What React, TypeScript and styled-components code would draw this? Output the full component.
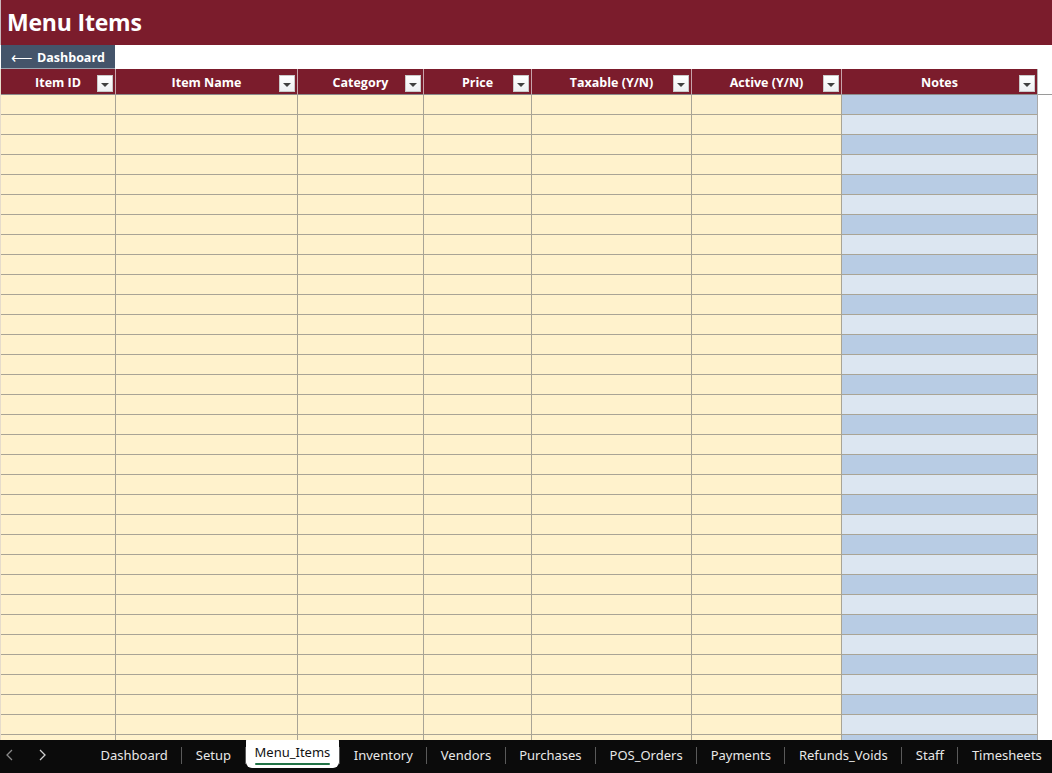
import React from "react";
import styled, { createGlobalStyle } from "styled-components";

const Global = createGlobalStyle`
  html, body { margin: 0; padding: 0; background: #ffffff; }
  body { font-family: "Open Sans", "Noto Sans", Arial, sans-serif; overflow: hidden; }
  * { box-sizing: border-box; }
`;

const Page = styled.div`
  width: 1052px;
  height: 773px;
  display: flex;
  flex-direction: column;
  background: #ffffff;
  overflow: hidden;
`;

const TitleBar = styled.div`
  height: 45px;
  background: #7b1c2c;
  border-left: 1px solid #c8b7bb;
  display: flex;
  align-items: center;
  padding-left: 6px;
`;

const Title = styled.h1`
  margin: 0;
  color: #ffffff;
  font-family: "Open Sans", "Noto Sans", sans-serif;
  font-weight: 700;
  font-size: 23px;
  letter-spacing: -0.2px;
  margin-top: -1px;
`;

const ButtonRow = styled.div`
  height: 24px;
  display: flex;
  padding-left: 1px;
`;

const BackButton = styled.div`
  width: 114px;
  height: 24px;
  padding-top: 1px;
  background: #44546a;
  color: #ffffff;
  font-weight: 700;
  font-size: 12.5px;
  display: flex;
  align-items: center;
  justify-content: center;
  gap: 4px;
  border-bottom: 1px solid #9aa3ae;
`;

const Sheet = styled.div`
  flex: 1;
  overflow: hidden;
  border-left: 1px solid #e6dccb;
`;

const COLS = "114px 182px 126px 108px 160px 150px 196px 1fr";

const HeaderRow = styled.div`
  display: grid;
  grid-template-columns: ${COLS};
  height: 26px;
`;

const HeaderCell = styled.div`
  position: relative;
  background: #7b1c2c;
  color: #ffffff;
  font-weight: 700;
  font-size: 12.5px;
  padding-top: 1px;
  display: flex;
  align-items: center;
  justify-content: center;
  border-left: 1px solid #c9a4ab;
  border-bottom: 1px solid #8c8c8c;
  &:first-child { border-left: none; }
`;

const HeaderFiller = styled.div`
  background: #ffffff;
  border-bottom: 1px solid #9a9a9a;
  border-left: 1px solid #b7b7b7;
`;

const FilterButton = styled.div`
  position: absolute;
  right: 2px;
  top: 6px;
  width: 16px;
  height: 17px;
  background: linear-gradient(#ffffff, #eef0f3);
  border: 1px solid #c9c9c9;
  display: flex;
  align-items: center;
  justify-content: center;
`;

const Tri = styled.div`
  width: 0;
  height: 0;
  border-left: 4px solid transparent;
  border-right: 4px solid transparent;
  border-top: 4px solid #404040;
  margin-top: 2px;
`;

const DataRow = styled.div`
  display: grid;
  grid-template-columns: ${COLS};
  height: 20px;
`;

const Cell = styled.div<{ $notes?: boolean; $dark?: boolean }>`
  background: ${(p) => (p.$notes ? (p.$dark ? "#b8cce4" : "#dce6f1") : "#fff2cc")};
  border-left: 1px solid #a9a495;
  border-bottom: 1px solid #a9a495;
  &:first-child { border-left: none; }
`;

const Filler = styled.div`
  background: #ffffff;
  border-left: 1px solid #a9a9a9;
`;

const TabBar = styled.div`
  height: 33px;
  background: #0b0b0b;
  display: flex;
  align-items: center;
  position: relative;
  overflow: hidden;
  font-family: "Noto Sans", "Open Sans", sans-serif;
`;

const Arrows = styled.div`
  display: flex;
  flex-shrink: 0;
  align-items: center;
  width: 87px;
  padding-left: 4px;
  gap: 20px;
  padding-bottom: 3px;
`;

const Arrow = styled.div`
  width: 12px;
  display: flex;
  justify-content: center;
`;

const Tab = styled.div<{ $active?: boolean }>`
  flex-shrink: 0;
  height: ${(p) => (p.$active ? "29px" : "33px")};
  align-self: ${(p) => (p.$active ? "flex-start" : "center")};
  margin-top: ${(p) => (p.$active ? "-1px" : "0")};
  padding: 0 ${(p) => (p.$active ? "9px" : "13.5px")} 3px;
  display: flex;
  align-items: center;
  justify-content: center;
  position: relative;
  font-size: 13px;
  color: ${(p) => (p.$active ? "#111111" : "#e8e8e8")};
  background: ${(p) => (p.$active ? "#ffffff" : "transparent")};
  border-radius: ${(p) => (p.$active ? "2px 2px 6px 6px" : "0")};
  white-space: nowrap;
`;

const Underline = styled.div`
  position: absolute;
  left: 9px;
  right: 9px;
  bottom: 3px;
  height: 2px;
  background: #217346;
  border-radius: 1px;
`;

const Sep = styled.div`
  flex-shrink: 0;
  width: 1px;
  height: 17px;
  margin-bottom: 3px;
  background: #5a5a5a;
`;

const columns = [
  "Item ID",
  "Item Name",
  "Category",
  "Price",
  "Taxable (Y/N)",
  "Active (Y/N)",
  "Notes",
];

const tabs = [
  "Dashboard",
  "Setup",
  "Menu_Items",
  "Inventory",
  "Vendors",
  "Purchases",
  "POS_Orders",
  "Payments",
  "Refunds_Voids",
  "Staff",
  "Timesheets",
];

const ROWS = 33;

export default function App() {
  return (
    <Page>
      <Global />
      <TitleBar>
        <Title>Menu Items</Title>
      </TitleBar>
      <ButtonRow>
        <BackButton>
          <span style={{ fontWeight: 400, fontSize: 15 }}>⟵</span>
          <span>Dashboard</span>
        </BackButton>
      </ButtonRow>
      <Sheet>
        <HeaderRow>
          {columns.map((c) => (
            <HeaderCell key={c}>
              {c}
              <FilterButton>
                <Tri />
              </FilterButton>
            </HeaderCell>
          ))}
          <HeaderFiller />
        </HeaderRow>
        {Array.from({ length: ROWS }).map((_, r) => (
          <DataRow key={r}>
            {columns.map((c, i) => (
              <Cell key={c} $notes={i === 6} $dark={r % 2 === 0} />
            ))}
            <Filler />
          </DataRow>
        ))}
      </Sheet>
      <TabBar>
        <Arrows>
          <Arrow>
            <svg width="10" height="12" viewBox="0 0 10 12">
              <path d="M7 1 L2 6 L7 11" stroke="#8a8a8a" strokeWidth="1.3" fill="none" />
            </svg>
          </Arrow>
          <Arrow>
            <svg width="10" height="12" viewBox="0 0 10 12">
              <path d="M3 1 L8 6 L3 11" stroke="#d0d0d0" strokeWidth="1.3" fill="none" />
            </svg>
          </Arrow>
        </Arrows>
        {tabs.map((t, i) => (
          <React.Fragment key={t}>
            {i > 0 && t !== "Menu_Items" && tabs[i - 1] !== "Menu_Items" && <Sep />}
            {t === "Menu_Items" && <Sep />}
            <Tab $active={t === "Menu_Items"}>
              {t}
              {t === "Menu_Items" && <Underline />}
            </Tab>
            {t === "Menu_Items" && <Sep />}
          </React.Fragment>
        ))}
      </TabBar>
    </Page>
  );
}
